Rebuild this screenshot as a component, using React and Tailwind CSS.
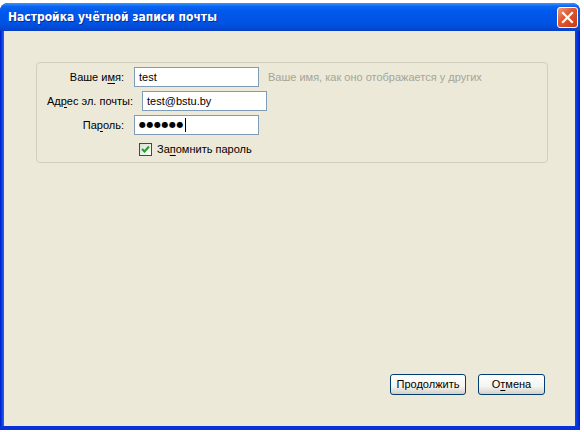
import React from 'react'

// label text with one underlined access-key letter
const Key = ({ pre, k, post }) => (
    <span>
        {pre}<span className="underline underline-offset-[2px]">{k}</span>{post}
    </span>
)

const Field = ({ children, width = "w-[125px]", ml = "ml-[10px]" }) => (
    <div className={`${width} ${ml} h-[20px] border border-[#7f9db9] bg-white flex items-center px-[4px] text-black`}>
        {children}
    </div>
)

const CloseButton = () => (
    <div className="w-[21px] h-[21px] rounded-[3px] border border-white bg-[linear-gradient(135deg,#f39b7c_0%,#e25a31_40%,#c63b14_100%)] flex items-center justify-center">
        <svg width="13" height="13" viewBox="0 0 13 13">
            <path d="M2 2 L11 11 M11 2 L2 11" stroke="white" strokeWidth="2.2" strokeLinecap="square" />
        </svg>
    </div>
)

const XpButton = ({ children, width }) => (
    <div className={`${width} h-[21px] rounded-[3px] border border-[#003c74] bg-[linear-gradient(180deg,#ffffff_0%,#f4f4f0_60%,#d6d0c5_100%)] flex items-center justify-center text-black`}>
        {children}
    </div>
)

const App = () => {
    return (
        <div className="w-[584px] h-[432px] bg-white pt-[3px] font-['Liberation_Sans',Arial,sans-serif] text-[11px] text-black">
            <div className="w-[580px] h-[427px] flex flex-col rounded-t-[8px] overflow-hidden bg-[#0831d9]">

                {/* title bar */}
                <div className="h-[28px] flex items-center justify-between pl-[8px] pr-[2px] bg-[linear-gradient(180deg,#3d95ff_0%,#0a66f2_12%,#0058ee_30%,#0054e3_70%,#0349d6_90%,#0a3fc0_100%)]">
                    <span className="text-white font-bold text-[12px] font-['DejaVu_Sans_Condensed','Liberation_Sans',sans-serif] [text-shadow:1px_1px_0_#0a2a9a]">
                        Настройка учётной записи почты
                    </span>
                    <CloseButton />
                </div>

                {/* frame */}
                <div className="flex-1 flex pb-[4px] bg-[linear-gradient(180deg,#0a4ce6_0%,#0831d9_100%)]">
                    <div className="w-[4px] bg-[linear-gradient(90deg,#0019cf,#166aee)]" />
                    <div className="w-[571px] bg-[#ece9d8] flex flex-col pt-[31px] pl-[32px]">

                        {/* group box */}
                        <div className="w-[512px] h-[101px] border border-[#d0d0bf] rounded-[4px] pt-[4px]">
                            <div className="flex items-center">
                                <div className="w-[87px] text-right"><Key pre="Ваше и" k="м" post="я:" /></div>
                                <Field>test</Field>
                                <span className="ml-[9px] text-[#a5a597]">Ваше имя, как оно отображается у других</span>
                            </div>
                            <div className="flex items-center mt-[4px]">
                                <div className="w-[96px] text-right"><Key pre="Ад" k="р" post="ес эл. почты:" /></div>
                                <Field ml="ml-[9px]">test@bstu.by</Field>
                            </div>
                            <div className="flex items-center mt-[4px]">
                                <div className="w-[87px] text-right"><Key pre="Па" k="р" post="оль:" /></div>
                                <Field>
                                    <span className="text-[8px] tracking-[0.5px] leading-none font-['DejaVu_Sans',sans-serif]">●●●●●●</span>
                                    <span className="ml-[1px] w-[1px] h-[14px] bg-black" />
                                </Field>
                            </div>
                            <div className="flex items-center mt-[6px] ml-[102px]">
                                <div className="w-[13px] h-[13px] border border-[#1c5180] bg-[linear-gradient(135deg,#dcdcd7,#ffffff)] flex items-center justify-center">
                                    <svg width="9" height="9" viewBox="0 0 9 9">
                                        <path d="M1 4 L3.5 6.5 L8 1.5" stroke="#21a121" strokeWidth="2" fill="none" />
                                    </svg>
                                </div>
                                <span className="ml-[5px]"><Key pre="За" k="п" post="омнить пароль" /></span>
                            </div>
                        </div>

                        {/* buttons */}
                        <div className="flex mt-[211px] ml-[354px] gap-[12px]">
                            <XpButton width="w-[76px]">Продолжить</XpButton>
                            <XpButton width="w-[67px]"><Key pre="О" k="т" post="мена" /></XpButton>
                        </div>
                    </div>
                    <div className="w-[5px] bg-[linear-gradient(90deg,#0a4ce6,#0019cf)]" />
                </div>
            </div>
        </div>
    )
}

export default App
